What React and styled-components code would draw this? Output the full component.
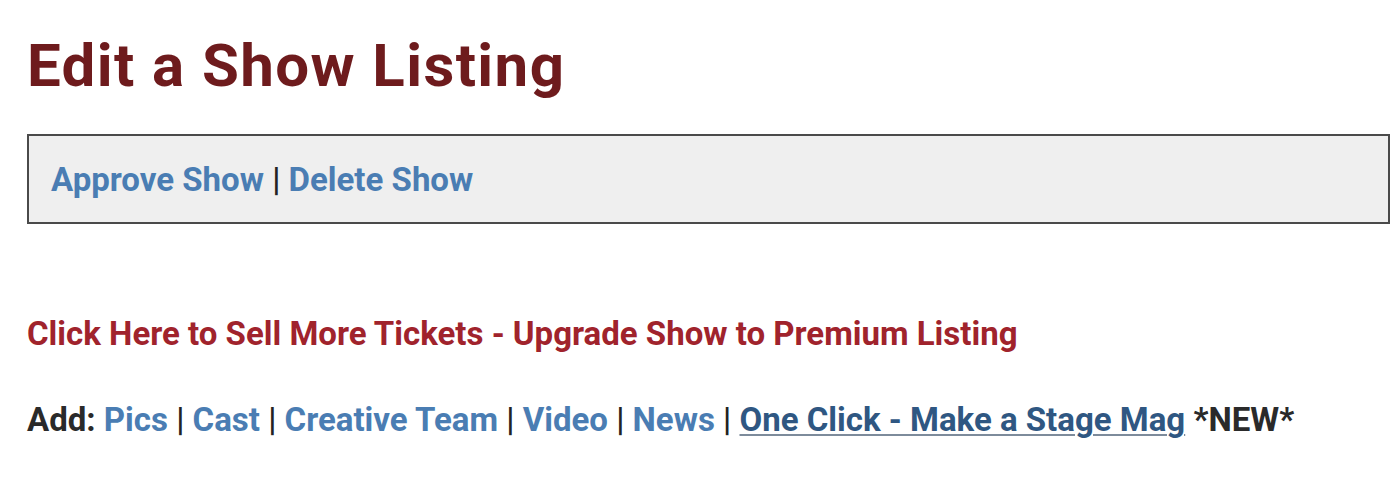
import React from "react";
import styled, { createGlobalStyle } from "styled-components";

const Global = createGlobalStyle`
  html, body { margin: 0; padding: 0; background: #ffffff; }
  body { font-family: Roboto, "Liberation Sans", Arial, sans-serif; }
`;

const Page = styled.div`
  padding: 32px 10px 0 27px;
  width: 1400px;
  box-sizing: border-box;
`;

const Title = styled.h1`
  margin: 0;
  font-size: 60px;
  font-weight: 700;
  color: #6e1b1d;
  line-height: 67px;
  letter-spacing: 1.4px;
`;

const ActionBox = styled.div`
  margin-top: 35px;
  width: 1363px;
  height: 90px;
  box-sizing: border-box;
  border: 2px solid #4a4a4a;
  background: #efefef;
  display: flex;
  align-items: center;
  padding-left: 22px;
  font-size: 33px;
  font-weight: 700;
  white-space: pre;
`;

const Link = styled.a`
  color: ${(p) => (p.$dark ? "#2f5782" : "#4a7db3")};
  text-decoration: ${(p) => (p.$underline ? "underline" : "none")};
  text-decoration-color: #7d8b9b;
  text-decoration-thickness: 2px;
  text-underline-offset: 3px;
  cursor: pointer;
`;

const Sep = styled.span`
  color: #232323;
  font-weight: 500;
`;

const Promo = styled.a`
  display: block;
  margin-top: 90px;
  font-size: 33px;
  line-height: 40px;
  font-weight: 700;
  color: #a0232c;
  text-decoration: none;
`;

const AddRow = styled.div`
  margin-top: 46px;
  font-size: 33px;
  line-height: 40px;
  font-weight: 700;
  color: #2a2a2a;
  white-space: pre;
`;

const Label = styled.span`
  color: #2a2a2a;
`;

export default function App() {
  const items = ["Pics", "Cast", "Creative Team", "Video", "News"];
  return (
    <>
      <Global />
      <Page>
        <Title>Edit a Show Listing</Title>
        <ActionBox>
          <Link>Approve Show</Link>
          <Sep> | </Sep>
          <Link>Delete Show</Link>
        </ActionBox>
        <Promo>Click Here to Sell More Tickets - Upgrade Show to Premium Listing</Promo>
        <AddRow>
          <Label>Add: </Label>
          {items.map((it) => (
            <React.Fragment key={it}>
              <Link>{it}</Link>
              <Sep> | </Sep>
            </React.Fragment>
          ))}
          <Link $dark $underline>One Click - Make a Stage Mag</Link>
          <Label> *NEW*</Label>
        </AddRow>
      </Page>
    </>
  );
}
